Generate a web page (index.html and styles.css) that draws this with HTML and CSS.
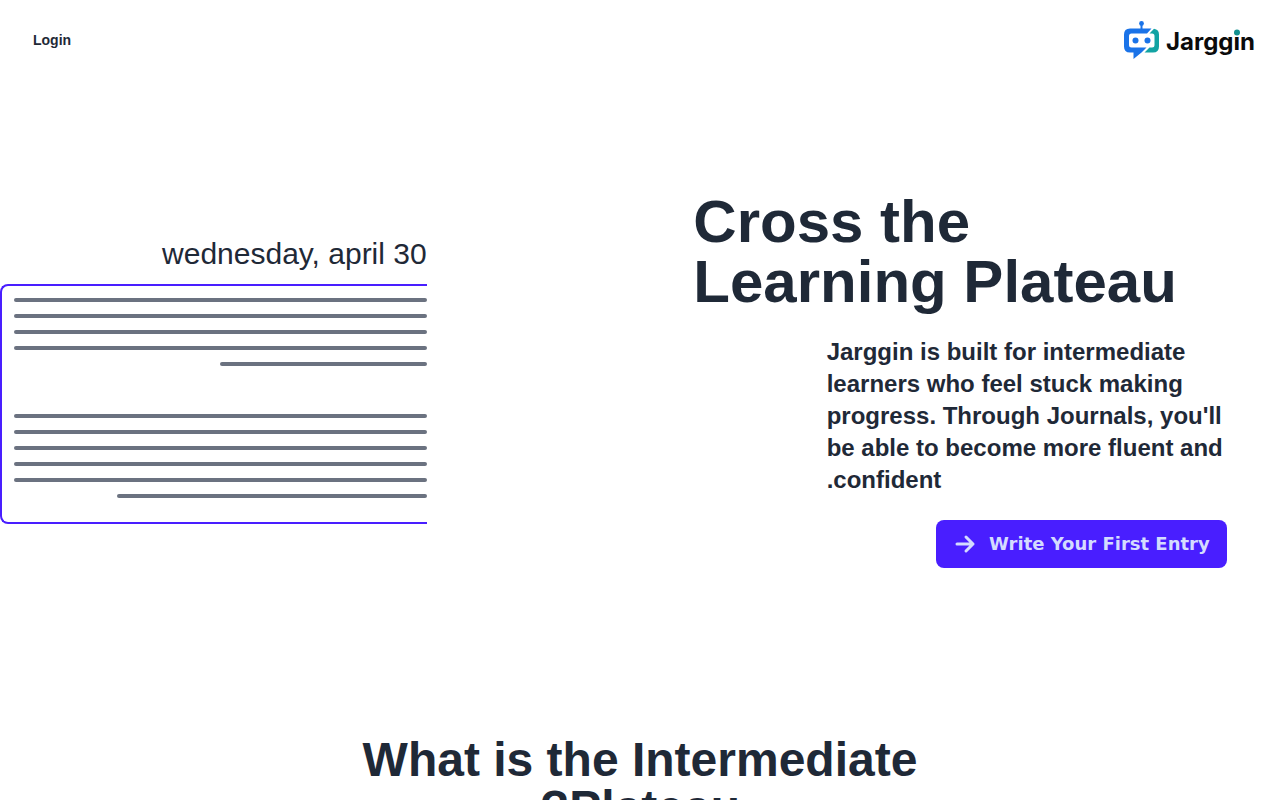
FILE: index.html
```html
<!DOCTYPE html>
<html lang="en" dir="rtl">
<head>
  <meta charset="UTF-8" />
  <meta name="viewport" content="width=device-width, initial-scale=1.0" />
  <title>Jarggin</title>
  <link rel="stylesheet" href="styles.css">
</head>
<body>
  <header class="navbar">
    <a class="logo" href="#" aria-label="Jarggin">
      <svg width="134" height="40" viewBox="0 0 134 40" direction="ltr">
        <path d="M19.500 3v6" stroke="#1a73e8" stroke-width="2" />
        <circle cx="19.500" cy="3.500" r="2.400" fill="#1a73e8" />
        <path d="M29.500 8.500H8Q2 8.500 2 14.500v12q0 6 6 6h3.500v6.500l8-6.500 5-5H9.500Q7 27.500 7 25V16Q7 13.500 9.500 13.500H25z" fill="#1a73e8" />
        <path d="M32 8.700Q37 9.500 37 14.500v12q0 6-6 6h-8.500l5-5H30q2.500 0 2.500-2.500V16Q32.500 13.500 30 13.500h-2.500z" fill="#12a3a3" />
        <circle cx="13.500" cy="20.500" r="3" fill="#1a73e8" />
        <circle cx="25.500" cy="20.500" r="3" fill="#1a73e8" />
        <text class="logo-text" x="44" y="30">Jarggin</text>
        <circle cx="115" cy="12.500" r="3" fill="#12908f" />
      </svg>
    </a>
    <a class="login" href="#">Login</a>
  </header>

  <main>
    <section class="hero">
      <div class="hero-col">
        <div class="hero-text">
          <h1>Cross the Learning Plateau</h1>
          <p>Jarggin is built for intermediate learners who feel stuck making progress. Through Journals, you'll be able to become more fluent and confident.</p>
          <button class="start-btn" type="button">
            Write Your First Entry
            <svg width="24" height="24" viewBox="0 0 24 24" fill="none" stroke="currentColor" stroke-width="3" stroke-linecap="round" stroke-linejoin="round">
              <path d="M4 12h16M13 5l7 7-7 7" />
            </svg>
          </button>
        </div>
      </div>

      <div class="hero-col journal-col">
        <div class="journal">
          <div class="journal-date">wednesday, april 30</div>
          <div class="journal-page">
            <div class="lines">
              <span></span>
              <span></span>
              <span></span>
              <span></span>
              <span class="half"></span>
            </div>
            <div class="lines">
              <span></span>
              <span></span>
              <span></span>
              <span></span>
              <span></span>
              <span class="most"></span>
            </div>
          </div>
        </div>
      </div>
    </section>

    <section class="about">
      <h2>What is the Intermediate Plateau?</h2>
    </section>
  </main>
</body>
</html>
```
FILE: styles.css
```css
* {
  box-sizing: border-box;
}

body {
  margin: 0;
  font-family: "Liberation Sans", Arial, sans-serif;
  color: #1f2937;
  background-color: #fff;
}

h1, h2, p {
  margin: 0;
}

.navbar {
  display: flex;
  justify-content: space-between;
  align-items: center;
  height: 80px;
  padding: 0 24px 0 33px;
}

.logo svg {
  display: block;
}

.logo-text {
  font-family: Inter, sans-serif;
  font-size: 24px;
  font-weight: 700;
  fill: #0b0b0b;
}

.login {
  font-size: 14px;
  font-weight: bold;
  color: #1f2937;
  text-decoration: none;
}

.hero {
  display: flex;
  align-items: center;
  min-height: 600px;
}

.hero-col {
  width: 50%;
}

.hero-text {
  display: flex;
  flex-direction: column;
  align-items: flex-start;
  gap: 24px;
  width: calc(100% * 10 / 12);
  margin: 0 auto;
}

.hero-text h1 {
  width: 100%;
  font-size: 60px;
  line-height: 60px;
  text-align: left;
}

.hero-text p {
  max-width: 400px;
  font-size: 24px;
  line-height: 32px;
  font-weight: bold;
  text-align: left;
}

.start-btn {
  display: flex;
  align-items: center;
  gap: 12px;
  height: 48px;
  padding: 0 17px;
  border: none;
  border-radius: 8px;
  background-color: #491eff;
  color: #d4dbff;
  font-family: "DejaVu Sans", sans-serif;
  font-size: 18px;
  line-height: 18px;
  font-weight: bold;
  white-space: nowrap;
  cursor: pointer;
}

.journal-col {
  display: flex;
  justify-content: flex-end;
}

.journal {
  width: calc(100% * 2 / 3);
}

.journal-date {
  margin-bottom: 12px;
  font-size: 30px;
  line-height: 36px;
}

.journal-page {
  display: flex;
  flex-direction: column;
  gap: 48px;
  padding: 12px 0 24px 12px;
  border: 2px solid #491eff;
  border-right: none;
  border-radius: 8px 0 0 8px;
}

.lines {
  display: flex;
  flex-direction: column;
  gap: 12px;
}

.lines span {
  height: 4px;
  border-radius: 2px;
  background-color: #6b7280;
}

.lines .half {
  width: 50%;
}

.lines .most {
  width: 75%;
}

.about {
  max-width: 672px;
  margin: 0 auto;
  padding: 56px 32px;
  text-align: center;
}

.about h2 {
  font-size: 48px;
  line-height: 48px;
}
```
